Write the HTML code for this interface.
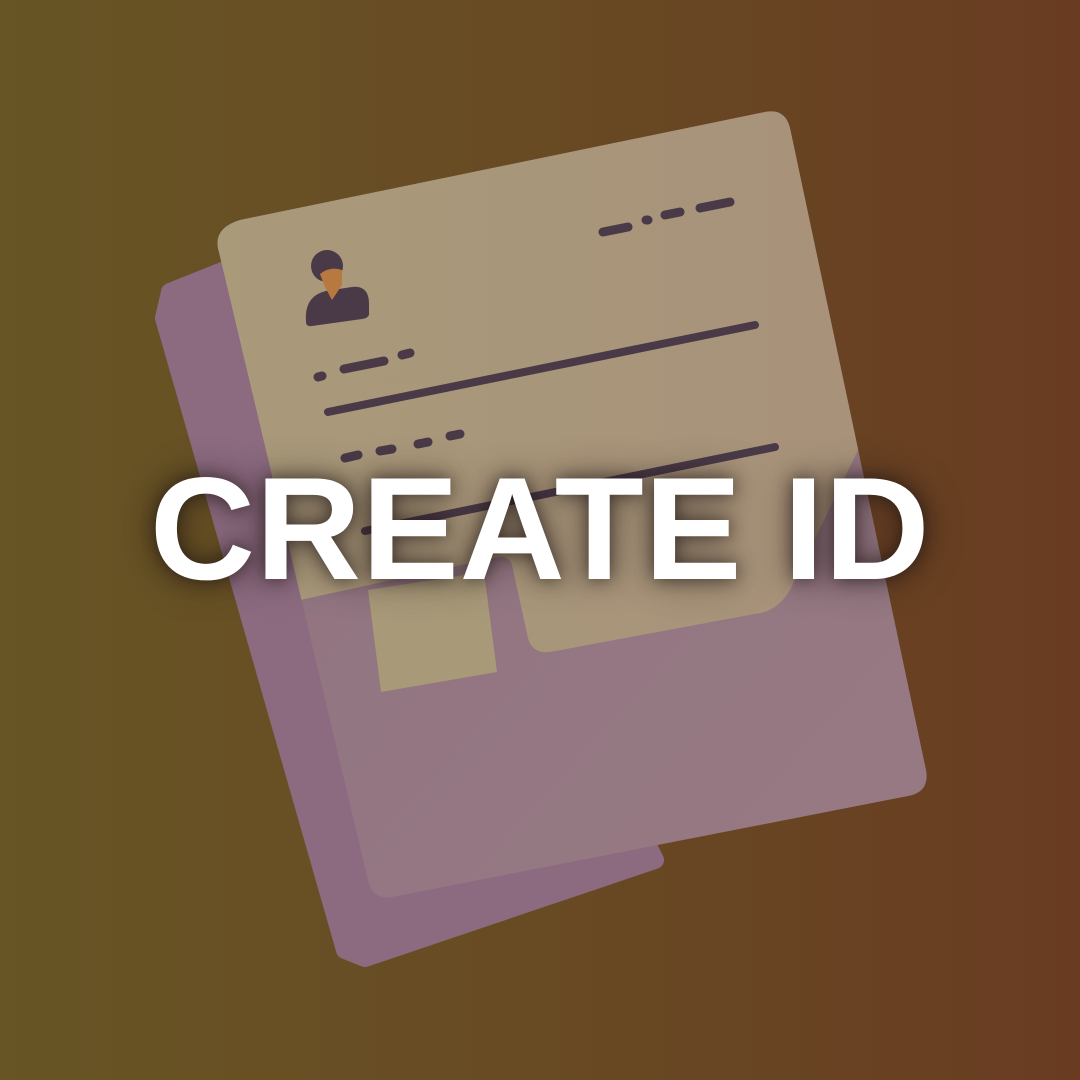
<!DOCTYPE html>
<html><head><meta charset="utf-8"><style>
html,body{margin:0;padding:0}
body{width:1080px;height:1080px;overflow:hidden;position:relative;background:linear-gradient(90deg,#675525 0%,#684a23 50%,#693c22 100%);font-family:"Liberation Sans",Arial,sans-serif}
svg{position:absolute;left:0;top:0}
.t{position:absolute;left:0;width:1080px;top:454px;text-align:center;color:#fff;font-weight:bold;font-size:146px;line-height:150px;letter-spacing:0.5px;text-shadow:0 0 18px rgba(30,20,20,0.75),0 0 40px rgba(30,20,20,0.45)}
</style></head><body>
<svg width="1080" height="1080" viewBox="0 0 1080 1080">
<defs>
<linearGradient id="pg" x1="0" y1="0" x2="1" y2="1"><stop offset="0" stop-color="#8e7280"/><stop offset="1" stop-color="#977a83"/></linearGradient>
<linearGradient id="tg" x1="0" y1="0" x2="1" y2="0"><stop offset="0" stop-color="#a99a7a"/><stop offset="1" stop-color="#a8927a"/></linearGradient>
<clipPath id="fc"><path d="M240,220 L765,112 Q785,108 790,128 L926,770 Q930,792 908,796 L392,897 Q372,900 368,880 L218,248 Q214,228 240,220 Z"/></clipPath>
</defs>
<polygon points="170,292 235,266 600,750 655,860 365,958 345,950 164,318" fill="#8c6b80" stroke="#8c6b80" stroke-width="18" stroke-linejoin="round"/>
<path d="M240,220 L765,112 Q785,108 790,128 L926,770 Q930,792 908,796 L392,897 Q372,900 368,880 L218,248 Q214,228 240,220 Z" fill="url(#pg)"/>
<path clip-path="url(#fc)" d="M190,200 L800,80 L880,430 L858,450 L790,590 Q778,610 760,613 L550,652 Q532,654 528,638 L512,565 Q508,555 498,557 L300,600 Z" fill="url(#tg)"/>
<path d="M368,590 L484,572 L497,672 L381,692 Z" fill="#a89979"/>
<g stroke="#4a3a48" stroke-linecap="round" fill="none">
<path d="M603,232 L628,227 M646,220 L648,220 M665,215 L680,212 M700,208 L730,202" stroke-width="9"/>
<path d="M318,377 L322,376 M344,369 L384,361 M402,355 L410,353" stroke-width="9"/>
<path d="M328,412 L755,325" stroke-width="8"/>
<path d="M345,458 L358,455 M380,451 L392,449 M418,444 L428,442 M450,436 L460,434" stroke-width="9"/>
<path d="M365,531 L775,447" stroke-width="8"/>
</g>
<circle cx="327" cy="266" r="16" fill="#4a3a48"/>
<path d="M306,322 Q304,296 326,291 L352,287 Q369,285 369,304 L369,312 Q370,318 362,319 L312,326 Q306,327 306,322 Z" fill="#4a3a48"/>
<path d="M320,274 Q330,266 342,270 L342,285 L332,300 L325,287 Z" fill="#b7793f"/>
</svg>
<div class="t">CREATE ID</div>
</body></html>
